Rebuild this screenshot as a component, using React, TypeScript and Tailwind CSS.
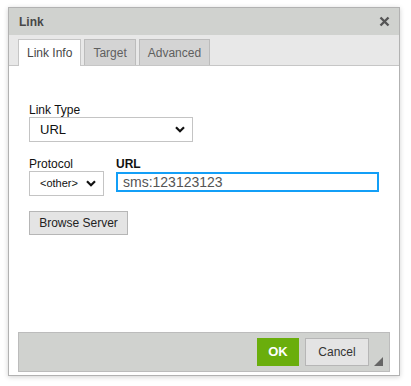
import React from "react";

const font = { fontFamily: '"Liberation Sans", Arial, sans-serif' };

function Chevron() {
  return (
    <svg width="10" height="7" viewBox="0 0 10 7" className="shrink-0">
      <path d="M1 1.2 L5 5.2 L9 1.2" fill="none" stroke="#111" strokeWidth="2.2" />
    </svg>
  );
}

function FakeSelect({ value, width, small }: { value: string; width: string; small?: boolean }) {
  return (
    <div
      className={`${width} h-[25px] flex items-center justify-between border border-[#c4c4c4] bg-white pl-[10px] pr-[7px] ${
        small ? "text-[11px]" : "text-[13px]"
      } text-[#111]`}
    >
      <span>{value}</span>
      <Chevron />
    </div>
  );
}

export default function App() {
  const tabs = ["Link Info", "Target", "Advanced"];

  return (
    <div className="w-[411px] h-[386px] bg-white pt-[7px] pl-[8px]" style={font}>
      <div className="w-[392px] border border-[#b2b2b2] shadow-[0_1px_5px_rgba(0,0,0,0.18)] flex flex-col">
        {/* Title */}
        <div className="h-[27px] bg-[#d0d2cf] flex items-center justify-between pl-[10px] pr-[9px]">
          <span className="text-[12px] font-bold text-[#474747]">Link</span>
          <svg width="11" height="11" viewBox="0 0 11 11">
            <path d="M1.5 1.5 L9.5 9.5 M9.5 1.5 L1.5 9.5" stroke="#555" strokeWidth="2.4" />
          </svg>
        </div>

        {/* Tabs */}
        <div className="h-[31px] bg-[#e8e8e8] border-b border-[#c6c6c6] flex items-end pl-[9px] gap-[3px]">
          {tabs.map((t, i) => (
            <div
              key={t}
              className={`h-[26px] px-[8px] flex items-center text-[12px] border border-b-0 ${
                i === 0
                  ? "bg-white border-[#c6c6c6] text-[#474747] h-[27px] -mb-px"
                  : "bg-[#d4d4d4] border-[#bcbcbc] text-[#5f5f5f]"
              }`}
            >
              {t}
            </div>
          ))}
        </div>

        {/* Body */}
        <div className="h-[309px] bg-white flex flex-col">
          <div className="flex-1 pt-[37px] px-[20px] text-[12px] text-[#111]">
            <div className="leading-[14px]">Link Type</div>
            <FakeSelect value="URL" width="w-[164px]" />

            <div className="flex gap-[12px] mt-[15px]">
              <div>
                <div className="leading-[14px]">Protocol</div>
                <FakeSelect value="<other>" width="w-[75px]" small />
              </div>
              <div>
                <div className="leading-[14px] font-bold">URL</div>
                <div className="mt-[1px] w-[263px] h-[20px] border-2 border-[#139ff7] flex items-center pl-[5px] text-[14px] text-[#555]">
                  sms:123123123
                </div>
              </div>
            </div>

            <button className="mt-[15px] h-[24px] w-[99px] bg-[#e4e4e4] border border-[#b6b6b6] text-[12px] text-[#222] flex items-center justify-center">
              Browse Server
            </button>
          </div>

          {/* Footer */}
          <div className="mx-[9px] mb-[3px] h-[40px] bg-[#d0d2cf] border border-[#bcbcbc] flex items-center justify-end gap-[6px] pr-[20px] relative">
            <button className="h-[28px] w-[42px] bg-[#6aae0c] text-white font-bold text-[13px] flex items-center justify-center">
              OK
            </button>
            <button className="h-[28px] w-[64px] bg-[#e4e4e4] border border-[#b6b6b6] text-[12px] text-[#333] flex items-center justify-center">
              Cancel
            </button>
            <svg width="9" height="9" viewBox="0 0 9 9" className="absolute right-[6px] bottom-[5px]">
              <path d="M9 0 L9 9 L0 9 Z" fill="#666" />
            </svg>
          </div>
        </div>
      </div>
    </div>
  );
}
